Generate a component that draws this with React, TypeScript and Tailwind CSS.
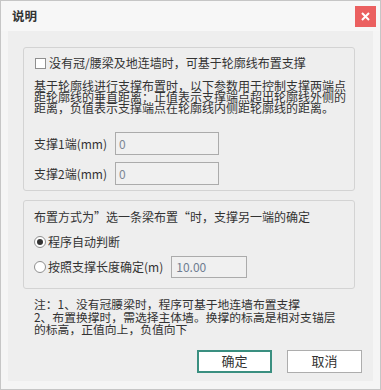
const cjk = '"Noto Sans CJK SC", "Microsoft YaHei", sans-serif'

function Field({ label, value }: { label: string; value: string }) {
  return (
    <div className="flex items-center h-[23px]">
      <span className="w-[81px] text-[12px] text-[#333]">{label}</span>
      <div className="w-[104px] h-[23px] border border-[#ababab] bg-[#f0f0f0] flex items-center pl-[3px] text-[12px] text-[#7d8794]">
        {value}
      </div>
    </div>
  )
}

function Radio({ checked }: { checked?: boolean }) {
  return (
    <span className="w-[12px] h-[12px] rounded-full border border-[#8f8f8f] bg-white flex items-center justify-center mr-[2px]">
      {checked && <span className="w-[6px] h-[6px] rounded-full bg-[#333]" />}
    </span>
  )
}

export default function App() {
  return (
    <div
      className="w-[381px] h-[390px] border border-[#c6c6c6] bg-[#f5f5f5] flex flex-col"
      style={{ fontFamily: cjk }}
    >
      {/* title bar */}
      <div className="h-[30px] flex items-center justify-between pl-[11px] pr-[4px] bg-[#f7f7f7]">
        <span className="text-[12.5px] font-semibold text-[#333]">说明</span>
        <button className="w-[21px] h-[21px] bg-[#eb6060] flex items-center justify-center">
          <svg width="9" height="9" viewBox="0 0 9 9">
            <path d="M1 1 L8 8 M8 1 L1 8" stroke="#fff" strokeWidth="2" />
          </svg>
        </button>
      </div>

      <div className="mx-[7px] mb-[8px] flex-1 bg-[#eeeeee] pt-[16px] pl-[15px] text-[#333] text-[12px]">
        {/* group 1 */}
        <div className="w-[332px] h-[144px] border border-[#d3d3d3] rounded-[3px] pl-[10px] pt-[7px]">
          <div className="flex items-center h-[16px]">
            <span className="w-[11px] h-[11px] border border-[#8f8f8f] bg-white ml-[1px] mr-[3px]" />
            没有冠/腰梁及地连墙时，可基于轮廓线布置支撑
          </div>
          <div className="mt-[9px] leading-[11px] whitespace-nowrap">
            <div>基于轮廓线进行支撑布置时，以下参数用于控制支撑两端点</div>
            <div>距轮廓线的垂直距离：正值表示支撑端点超出轮廓线外侧的</div>
            <div>距离，负值表示支撑端点在轮廓线内侧距轮廓线的距离。</div>
          </div>
          <div className="mt-[19px] flex flex-col gap-[7px]">
            <Field label="支撑1端(mm)" value="0" />
            <Field label="支撑2端(mm)" value="0" />
          </div>
        </div>

        {/* group 2 */}
        <div className="mt-[9px] w-[332px] h-[89px] border border-[#d3d3d3] rounded-[3px] pl-[10px] pt-[8px]">
          <div className="h-[16px] flex items-center">布置方式为”选一条梁布置“时，支撑另一端的确定</div>
          <div className="mt-[9px] h-[16px] flex items-center">
            <Radio checked />
            程序自动判断
          </div>
          <div className="mt-[6px] h-[22px] flex items-center">
            <Radio />
            按照支撑长度确定(m)
            <div className="ml-[8px] w-[76px] h-[22px] border border-[#ababab] bg-[#f0f0f0] flex items-center pl-[4px] text-[#6f7d90]">
              10.00
            </div>
          </div>
        </div>

        {/* notes */}
        <div className="mt-[9px] pl-[11px] leading-[12.5px] text-[11.8px] text-[#333] whitespace-nowrap">
          <div>注：1、没有冠腰梁时，程序可基于地连墙布置支撑</div>
          <div>2、布置换撑时，需选择主体墙。换撑的标高是相对支锚层</div>
          <div>的标高，正值向上，负值向下</div>
        </div>

        {/* buttons */}
        <div className="mt-[14px] flex gap-[15px] pl-[174px]">
          <button className="w-[75px] h-[23px] border-2 border-[#3a8f80] bg-white text-[13px] text-[#333] flex items-center justify-center">
            确定
          </button>
          <button className="w-[75px] h-[23px] border border-[#adadad] bg-white text-[13px] text-[#333] flex items-center justify-center">
            取消
          </button>
        </div>
      </div>
    </div>
  )
}
